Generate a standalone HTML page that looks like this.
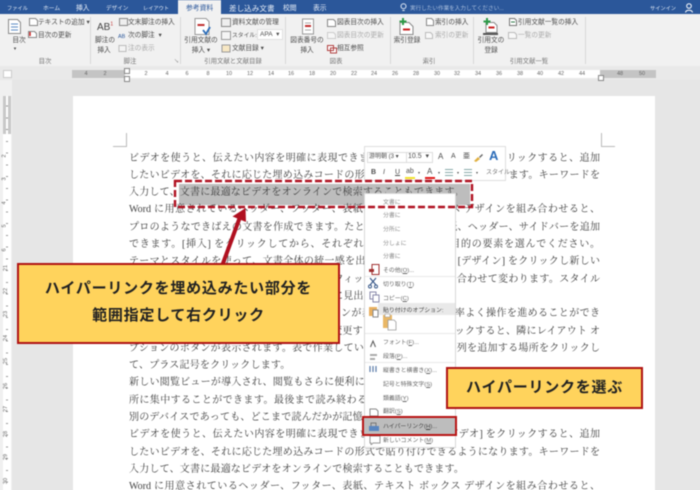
<!DOCTYPE html>
<html lang="ja"><head><meta charset="utf-8"><title>Word</title>
<style>
html,body{margin:0;padding:0;background:#e6e6e6}
#w{position:relative;width:700px;height:490px;overflow:hidden;background:#e6e6e6;font-family:"Liberation Sans","Noto Sans CJK JP",sans-serif}
#w div,#w span.t{position:absolute}
#i{left:-6px;top:-6px;width:712px;height:502px;background:#e6e6e6;filter:blur(.4px)}
#j{left:6px;top:6px;width:700px;height:490px}
.t{white-space:nowrap;font-size:6.7px;line-height:10px;color:#4d4d4d;height:10px;margin-top:1px}
.g{color:#aaa}
.c{text-align:center;transform:translateX(-50%)}
.tab{color:#e6edf7;font-size:6.8px;top:3px}
.lab{color:#777;font-size:6.4px;top:56px}
.sep{top:17px;width:1px;height:47px;background:#d8d8d8}
.n{font-size:5.5px;color:#666;top:68px;transform:translateX(-50%)}
.v{font-size:5.5px;color:#666;left:3px;transform:rotate(-90deg)}
#body{left:129px;top:149.6px;width:471px;font-family:"Liberation Serif","Noto Serif CJK JP","Noto Serif CJK SC",serif;font-size:10px;line-height:17.3px;color:#404040}
#body p{margin:0;height:17.3px;white-space:nowrap;text-align:justify;text-align-last:justify}
#body p.s{text-align-last:left;letter-spacing:.2px}
.m{font-size:5.9px;color:#666;left:383px;margin-top:2px}
.mg{color:#8a8a8a}
.box{background:#ffd35c;border:2px solid #b01212;box-sizing:border-box}
.bt{font-weight:700;color:#222;font-size:15px;letter-spacing:.75px;white-space:nowrap;line-height:20px;text-align:center;width:100%;left:0;margin-top:1px}
</style></head><body><div id="w"><div id="i"><div id="j">

<!-- title/tabs -->
<div style="left:-6px;top:-6px;width:712px;height:20px;background:#2b579a"></div>
<div style="left:178px;top:0;width:43px;height:15px;background:#f1f1f1"></div>
<span class="t tab" style="left:7px;font-size:5.2px">ファイル</span>
<span class="t tab" style="left:43px;font-size:5.8px">ホーム</span>
<span class="t tab" style="left:76px">挿入</span>
<span class="t tab" style="left:106px;font-size:5.6px">デザイン</span>
<span class="t tab" style="left:143px;font-size:5.2px">レイアウト</span>
<span class="t tab" style="left:186px;color:#2b579a">参考資料</span>
<span class="t tab" style="left:229px;font-size:7.6px">差し込み文書</span>
<span class="t tab" style="left:283px">校閲</span>
<span class="t tab" style="left:313px">表示</span>
<span class="t tab" style="left:410px;color:#a9bedd;font-size:5.6px">実行したい作業を入力してください...</span>
<span class="t tab" style="left:650px;font-size:5.2px">サインイン</span>
<svg style="position:absolute;left:685px;top:3px" width="10" height="10" viewBox="0 0 10 10"><circle cx="4" cy="3" r="2.3" fill="none" stroke="#fff"/><path d="M0.5 9.5C1 6.5 7 6.5 7.5 9.5" fill="none" stroke="#fff"/></svg>
<svg style="position:absolute;left:400px;top:3px" width="7" height="9" viewBox="0 0 7 9"><circle cx="3.5" cy="3.2" r="2.5" fill="none" stroke="#dfe8f5"/><path d="M2.3 7.5h2.4" stroke="#dfe8f5"/></svg>

<!-- ribbon -->
<div style="left:-6px;top:14px;width:712px;height:52px;background:#f1f1f1;border-bottom:1px solid #dcdcdc"></div>
<div class="sep" style="left:90px"></div><div class="sep" style="left:180px"></div><div class="sep" style="left:285px"></div><div class="sep" style="left:390px"></div><div class="sep" style="left:473px"></div><div class="sep" style="left:585px"></div>

<svg style="position:absolute;left:0;top:14px" width="700" height="40" viewBox="0 14 700 40">
<path d="M8.500 19.500h9l3 3v11h-12z" fill="#fff" stroke="#8a8a8a"/><path d="M11 24h7M11 27h7M11 30h7" stroke="#5b8bc4"/>
<path d="M29.500 18.500h6l2 2v5h-8z" fill="#fff" stroke="#888"/>
<path d="M28.500 31.500h6l2 2v4h-8z" fill="#fff" stroke="#888"/><path d="M30 32v4" stroke="#c82020" stroke-width="1.500"/>
<path d="M119.500 18.500h8v7h-8z" fill="#eee" stroke="#888"/>
<path d="M119 45.500h7v6h-7z" fill="#f4f4f4" stroke="#bbb"/>
<path d="M195 18.500h11l3 3v13h-14z" fill="#fff" stroke="#999"/><path d="M197.500 25h7" stroke="#c03030" stroke-width="2"/><path d="M203 30l3 4 4-7" fill="none" stroke="#2b6cb8" stroke-width="1.800"/>
<path d="M221.500 18.500h9v8h-9z" fill="#eee" stroke="#888"/>
<path d="M221.500 31.500h9v8h-9z" fill="#f4f4f4" stroke="#999"/>
<path d="M222 45h8v7h-8z" fill="#f7e7c4" stroke="#999"/>
<path d="M302.500 19h11v15h-11z" fill="#fff" stroke="#999"/><path d="M305 26h6" stroke="#c03030" stroke-width="2"/><path d="M305 23h6M305 30h6" stroke="#aaa"/>
<path d="M327.500 19.500h6l2 2v5h-8z" fill="#fff" stroke="#888"/>
<path d="M327.500 32.500h6l2 2v4h-8z" fill="#f6f6f6" stroke="#ccc"/>
<path d="M327.500 45.500h6v5h-6zM330.500 48h6v5h-6z" fill="#fff" stroke="#b04040"/>
<path d="M400 22.500h9l4 4v8h-13z" fill="#fff" stroke="#888"/><path d="M403 29.500h7" stroke="#c82020" stroke-width="2"/><path d="M403 18v7M399.500 21.500h7" stroke="#2e9a48" stroke-width="2"/>
<path d="M426.500 18.500h5l2 2v5h-7z" fill="#fff" stroke="#888"/>
<path d="M425.500 32.500h5l2 2v4h-7z" fill="#f8f8f8" stroke="#bbb"/>
<path d="M486 22.500h8l3 3v7h-11z" fill="#fff" stroke="#888"/><path d="M488.500 27.500h6" stroke="#c82020" stroke-width="2"/><path d="M487 18v7M483.500 21.500h7" stroke="#2e9a48" stroke-width="2"/><path d="M483 33h15v2h-15z" fill="#555"/>
<path d="M509.500 18.500h5l2 2v5h-7z" fill="#fff" stroke="#777"/><path d="M511 22h4" stroke="#2e7a48"/>
<path d="M508.500 32.500h6l2 2v4h-8z" fill="#f8f8f8" stroke="#bbb"/>
</svg>

<span class="t" style="left:38px;top:17px">テキストの追加 ▾</span>
<span class="t" style="left:38px;top:30px">目次の更新</span>
<span class="t c" style="left:19px;top:35px">目次</span>
<span class="t c" style="left:15px;top:43px;font-size:5px">▾</span>
<span class="t" style="left:97px;top:22px;font-size:10px;color:#444">AB<sup style="font-size:5px;color:#c03030;line-height:0">1</sup></span>
<span class="t c" style="left:105px;top:35px">脚注の</span>
<span class="t c" style="left:104px;top:45px">挿入</span>
<span class="t" style="left:128px;top:17px">文末脚注の挿入</span>
<span class="t" style="left:118px;top:31px;font-size:5.5px;color:#2b579a">AB</span>
<span class="t" style="left:128px;top:30px">次の脚注 &nbsp;▾</span>
<span class="t g" style="left:128px;top:43px">注の表示</span>
<span class="t c" style="left:201px;top:35px">引用文献の</span>
<span class="t c" style="left:201px;top:45px">挿入 ▾</span>
<span class="t" style="left:232px;top:17px">資料文献の管理</span>
<span class="t" style="left:232px;top:30px;font-size:5.8px">スタイル:</span>
<div style="left:257px;top:29px;width:26px;height:11px;background:#fff;border:1px solid #e0e0e0;box-sizing:border-box"></div>
<span class="t" style="left:260px;top:29px;font-size:6.5px">APA&nbsp; ▾</span>
<span class="t" style="left:232px;top:43px">文献目録 ▾</span>
<span class="t c" style="left:307px;top:35px">図表番号の</span>
<span class="t c" style="left:307px;top:45px">挿入</span>
<span class="t" style="left:337px;top:17px">図表目次の挿入</span>
<span class="t g" style="left:337px;top:30px">図表目次の更新</span>
<span class="t" style="left:337px;top:43px">相互参照</span>
<span class="t c" style="left:407px;top:35px">索引登録</span>
<span class="t" style="left:435px;top:17px">索引の挿入</span>
<span class="t g" style="left:435px;top:30px">索引の更新</span>
<span class="t c" style="left:491px;top:35px">引用文の</span>
<span class="t c" style="left:491px;top:45px">登録</span>
<span class="t" style="left:518px;top:17px">引用文献一覧の挿入</span>
<span class="t g" style="left:518px;top:30px">一覧の更新</span>
<span class="t lab c" style="left:45px">目次</span>
<span class="t lab c" style="left:130px">脚注</span>
<span class="t lab c" style="left:233px">引用文献と文献目録</span>
<span class="t lab c" style="left:336px">図表</span>
<span class="t lab c" style="left:429px">索引</span>
<span class="t lab c" style="left:529px">引用文献一覧</span>
<span class="t" style="left:174px;top:56px;font-size:5px;color:#888">↘</span>

<!-- h ruler -->
<div style="left:-6px;top:66px;width:712px;height:14px;background:#e9e9e9"></div>
<div style="left:3px;top:70px;width:9px;height:8px;background:#fff;border:1px solid #ccc;box-sizing:border-box"></div>
<div style="left:72px;top:70px;width:53px;height:8px;background:#c4c4c4"></div>
<div style="left:125px;top:70px;width:475px;height:8px;background:#fff"></div>
<div style="left:600px;top:70px;width:56px;height:8px;background:#c4c4c4"></div>
<div style="left:124px;top:68px;width:4px;height:4px;background:#fff;border:1px solid #888"></div>
<div style="left:124px;top:76px;width:4px;height:4px;background:#fff;border:1px solid #888"></div>
<div style="left:598px;top:75px;width:4px;height:4px;background:#fff;border:1px solid #888"></div>
<span class="t n" style="left:86px">4</span><span class="t n" style="left:105px">2</span>
<span class="t n" style="left:146px">2</span><span class="t n" style="left:167px">4</span><span class="t n" style="left:187px">6</span><span class="t n" style="left:208px">8</span><span class="t n" style="left:229px">10</span><span class="t n" style="left:250px">12</span><span class="t n" style="left:271px">14</span><span class="t n" style="left:291px">16</span><span class="t n" style="left:312px">18</span><span class="t n" style="left:333px">20</span><span class="t n" style="left:354px">22</span><span class="t n" style="left:374px">24</span><span class="t n" style="left:395px">26</span><span class="t n" style="left:416px">28</span><span class="t n" style="left:437px">30</span><span class="t n" style="left:457px">32</span><span class="t n" style="left:478px">34</span><span class="t n" style="left:499px">36</span><span class="t n" style="left:520px">38</span><span class="t n" style="left:540px">40</span><span class="t n" style="left:561px">42</span><span class="t n" style="left:582px">44</span><span class="t n" style="left:620px">48</span><span class="t n" style="left:642px">50</span>

<!-- v ruler -->
<div style="left:-6px;top:80px;width:18px;height:416px;background:#f0f0f0"></div>
<div style="left:3px;top:96px;width:8px;height:400px;background:#fff"></div>
<div style="left:3px;top:96px;width:8px;height:38px;background:#c8c8c8"></div>
<div style="left:6px;top:96px;width:2px;height:394px;background:repeating-linear-gradient(#fff 0 9.5px,#999 9.5px 10.5px,#fff 10.5px 11.75px)"></div>
<span class="t v" style="top:150px">2</span><span class="t v" style="top:173px">3</span><span class="t v" style="top:197px">4</span><span class="t v" style="top:220px">5</span><span class="t v" style="top:244px">6</span><span class="t v" style="top:262px">21</span><span class="t v" style="top:285px">22</span><span class="t v" style="top:308px">23</span><span class="t v" style="top:332px">24</span><span class="t v" style="top:355px">25</span><span class="t v" style="top:380px">26</span><span class="t v" style="top:403px">27</span><span class="t v" style="top:428px">28</span><span class="t v" style="top:451px">29</span><span class="t v" style="top:475px">30</span>

<!-- page -->
<div style="left:73px;top:96px;width:582px;height:400px;background:#fff"></div>
<div style="left:126px;top:133px;width:1px;height:14px;background:#bbb"></div>
<div style="left:113px;top:146px;width:14px;height:1px;background:#bbb"></div>
<div style="left:601px;top:133px;width:1px;height:14px;background:#bbb"></div>
<div style="left:601px;top:146px;width:14px;height:1px;background:#bbb"></div>

<!-- selection -->
<div style="left:179px;top:184px;width:291px;height:21px;background:#bdbdbd"></div>

<div id="body">
<p>ビデオを使うと、伝えたい内容を明確に表現できます。[オンライン ビデオ] をクリックすると、追加</p>
<p>したいビデオを、それに応じた埋め込みコードの形式で貼り付けできるようになります。キーワードを</p>
<p class="s">入力して、文書に最適なビデオをオンラインで検索することもできます。</p>
<p>Word に用意されているヘッダー、フッター、表紙、テキスト ボックス デザインを組み合わせると、</p>
<p>プロのようなできばえの文書を作成できます。たとえば、一致する表紙、ヘッダー、サイドバーを追加</p>
<p>できます。[挿入] をクリックしてから、それぞれのギャラリーから目的の要素を選んでください。</p>
<p>テーマとスタイルを使って、文書全体の統一感を出すこともできます。[デザイン] をクリックし新しい</p>
<p>テーマを選ぶと、図やグラフ、SmartArt グラフィックが新しいテーマに合わせて変わります。スタイル</p>
<p class="s">を適用すると、新しいテーマに適合するように見出しが変更されます。</p>
<p>Word では、必要に応じてその場に新しいボタンが表示されるため、効率よく操作を進めることができ</p>
<p>ます。文書内に写真をレイアウトする方法を変更するには、写真をクリックすると、隣にレイアウト オ</p>
<p>プションのボタンが表示されます。表で作業している場合は、行または列を追加する場所をクリックし</p>
<p class="s">て、プラス記号をクリックします。</p>
<p>新しい閲覧ビューが導入され、閲覧もさらに便利になりました。文書の一部を折りたたんで、必要な箇</p>
<p>所に集中することができます。最後まで読み終わる前に中止する必要がある場合、Word では、たとえ</p>
<p class="s">別のデバイスであっても、どこまで読んだかが記憶されます。</p>
<p>ビデオを使うと、伝えたい内容を明確に表現できます。[オンライン ビデオ] をクリックすると、追加</p>
<p>したいビデオを、それに応じた埋め込みコードの形式で貼り付けできるようになります。キーワードを</p>
<p class="s">入力して、文書に最適なビデオをオンラインで検索することもできます。</p>
<p>Word に用意されているヘッダー、フッター、表紙、テキスト ボックス デザインを組み合わせると、</p>
</div>

<!-- mini toolbar -->
<div style="left:364px;top:146px;width:142px;height:35px;background:#fff;border:1px solid #dedede;box-sizing:border-box"></div>
<div style="left:367px;top:152px;width:40px;height:11px;border:1px solid #ddd;box-sizing:border-box"></div>
<div style="left:406px;top:152px;width:27px;height:11px;border:1px solid #ddd;box-sizing:border-box"></div>
<span class="t" style="left:369px;top:151px;font-size:6px">游明朝 (3 ▾</span>
<span class="t" style="left:408px;top:151px;font-size:7px">10.5&nbsp; ▾</span>
<span class="t" style="left:438px;top:151px;font-size:8px">A</span>
<span class="t" style="left:451px;top:151px;font-size:7px">A</span>
<span class="t" style="left:463px;top:151px;font-size:7px">亜</span>
<svg style="position:absolute;left:473px;top:152px" width="11" height="11" viewBox="0 0 11 11"><path d="M1 9l4-4 2 2-4 3z" fill="#e0b040"/><path d="M6 5l3-3 1 1-3 3z" fill="#666"/></svg>
<span class="t" style="left:489px;top:148px;font-size:13px;font-weight:700;color:#2b6cb8;line-height:14px;height:14px">A</span>
<span class="t" style="left:486px;top:167px;font-size:6px;color:#777">スタイル</span>
<span class="t" style="left:371px;top:167px;font-weight:700;font-size:7px">B</span>
<span class="t" style="left:383px;top:167px;font-style:italic;font-size:7px">I</span>
<span class="t" style="left:395px;top:167px;text-decoration:underline;font-size:7px">U</span>
<span class="t" style="left:406px;top:166px;font-size:7px">ab</span>
<div style="left:405px;top:177px;width:10px;height:2px;background:#f2e22a"></div>
<span class="t" style="left:427px;top:166px;font-size:8px">A</span>
<div style="left:425px;top:177px;width:10px;height:2px;background:#e01818"></div>
<span class="t" style="left:418px;top:167px;font-size:4px">▾</span><span class="t" style="left:438px;top:167px;font-size:4px">▾</span><span class="t" style="left:457px;top:167px;font-size:4px">▾</span><span class="t" style="left:476px;top:167px;font-size:4px">▾</span>
<div style="left:445px;top:169px;width:8px;height:8px;background:repeating-linear-gradient(#8aa 0 1px,transparent 1px 3px)"></div>
<div style="left:464px;top:169px;width:8px;height:8px;background:repeating-linear-gradient(#8aa 0 1px,transparent 1px 3px)"></div>

<!-- context menu -->
<div style="left:364px;top:193px;width:92px;height:255px;background:#fff;border:1px solid #d8d8d8;box-sizing:border-box"></div>
<span class="t m mg" style="top:196px">文書に</span>
<span class="t m mg" style="top:209px">分書に</span>
<span class="t m mg" style="top:223px">分所に</span>
<span class="t m mg" style="top:237px">分しょに</span>
<span class="t m mg" style="top:250px">分書に</span>
<span class="t m" style="top:264px">その他(<u>O</u>)...</span>
<div style="left:365px;top:276px;width:90px;height:1px;background:#e8e8e8"></div>
<span class="t m" style="top:278px">切り取り(<u>T</u>)</span>
<span class="t m" style="top:292px">コピー(<u>C</u>)</span>
<div style="left:378px;top:303px;width:77px;height:12px;background:#e9e9e9"></div>
<span class="t m" style="top:304px;color:#444">貼り付けのオプション:</span>
<div style="left:365px;top:333px;width:90px;height:1px;background:#e8e8e8"></div>
<span class="t m" style="top:336px">フォント(<u>F</u>)...</span>
<span class="t m" style="top:350px">段落(<u>P</u>)...</span>
<div style="left:365px;top:362px;width:90px;height:1px;background:#e8e8e8"></div>
<span class="t m" style="top:364px">縦書きと横書き(<u>X</u>)...</span>
<span class="t m" style="top:378px">記号と特殊文字(<u>S</u>)</span>
<span class="t m" style="top:392px">類義語(<u>Y</u>)</span>
<span class="t m" style="top:405px">翻訳(<u>S</u>)</span>
<span class="t m" style="top:434px">新しいコメント(<u>M</u>)</span>
<svg style="position:absolute;left:364px;top:260px" width="20" height="185" viewBox="0 260 20 185">
<path d="M8 264.500h7v10h-7z" fill="#fff" stroke="#a03030"/><path d="M5 269h5v3H5z" fill="#a03030"/>
<path d="M6 278l6 7M12 278l-6 7" stroke="#3a5a8a" stroke-width="1.200"/><circle cx="6" cy="286.500" r="1.500" fill="none" stroke="#3a5a8a"/><circle cx="12" cy="286.500" r="1.500" fill="none" stroke="#3a5a8a"/>
<path d="M6 292h6v7H6z" fill="#fff" stroke="#88a"/><path d="M9 295h6v7H9z" fill="#fff" stroke="#88a"/>
<path d="M5 307h8v9H5z" fill="#e8b060"/><path d="M9 310h5v7H9z" fill="#fff" stroke="#888"/>
<path d="M6.500 347l2.500-6 2.500 6" fill="none" stroke="#555"/>
<path d="M6 354h7v2H6zM6 358h5v2H6z" fill="#aaa"/>
<path d="M6 372v-6M9 372v-6M12 372v-6" stroke="#5a7aa8" stroke-width="1.200"/>
<path d="M6 409h6l2 2v5H6z" fill="#fff" stroke="#888"/>
<path d="M6 436h10v7H9l-2 2v-2H6z" fill="#fff" stroke="#999"/>
</svg>
<svg style="position:absolute;left:382px;top:313px" width="16" height="18" viewBox="0 0 16 18"><path d="M1 2h9v13H1z" fill="#e9b765"/><path d="M3 1h5v3H3z" fill="#fff" stroke="#999" stroke-width=".6"/><path d="M6 7h6l2 2v8H6z" fill="#fff" stroke="#999" stroke-width=".8"/></svg>

<!-- hyperlink highlight -->
<div style="left:362px;top:416px;width:95px;height:20px;background:#bdbdbd;border:2.5px solid #b81414;box-sizing:border-box"></div>
<span class="t m" style="top:419.500px;color:#444">ハイパーリンク(<u>H</u>)...</span>
<svg style="position:absolute;left:367px;top:419px" width="14" height="14" viewBox="0 0 14 14"><path d="M2 7h10v5H2z" fill="#5a86c0"/><path d="M4 7V4h5v3" fill="none" stroke="#777"/></svg>

<!-- dashed annotation and arrow -->
<svg style="position:absolute;left:170px;top:176px" width="310" height="36" viewBox="170 176 310 36"><rect x="175" y="181" width="297" height="26" fill="none" stroke="#b01020" stroke-width="2.400" stroke-dasharray="7 3"/></svg>
<svg style="position:absolute;left:200px;top:200px" width="70" height="70" viewBox="200 200 70 70"><path d="M222 266L240 217" stroke="#b01020" stroke-width="4" fill="none"/><path d="M245.500 208L232.500 216.500 246 222z" fill="#b01020"/></svg>

<!-- callouts -->
<div class="box" style="left:17px;top:263px;width:323px;height:81px"></div>
<div class="bt" style="left:17px;width:323px;top:278px">ハイパーリンクを埋め込みたい部分を</div>
<div class="bt" style="left:17px;width:323px;top:305px">範囲指定して右クリック</div>
<div class="box" style="left:446px;top:367px;width:197px;height:42px"></div>
<div class="bt" style="left:446px;width:197px;top:377px">ハイパーリンクを選ぶ</div>

</div></div></div></body></html>
